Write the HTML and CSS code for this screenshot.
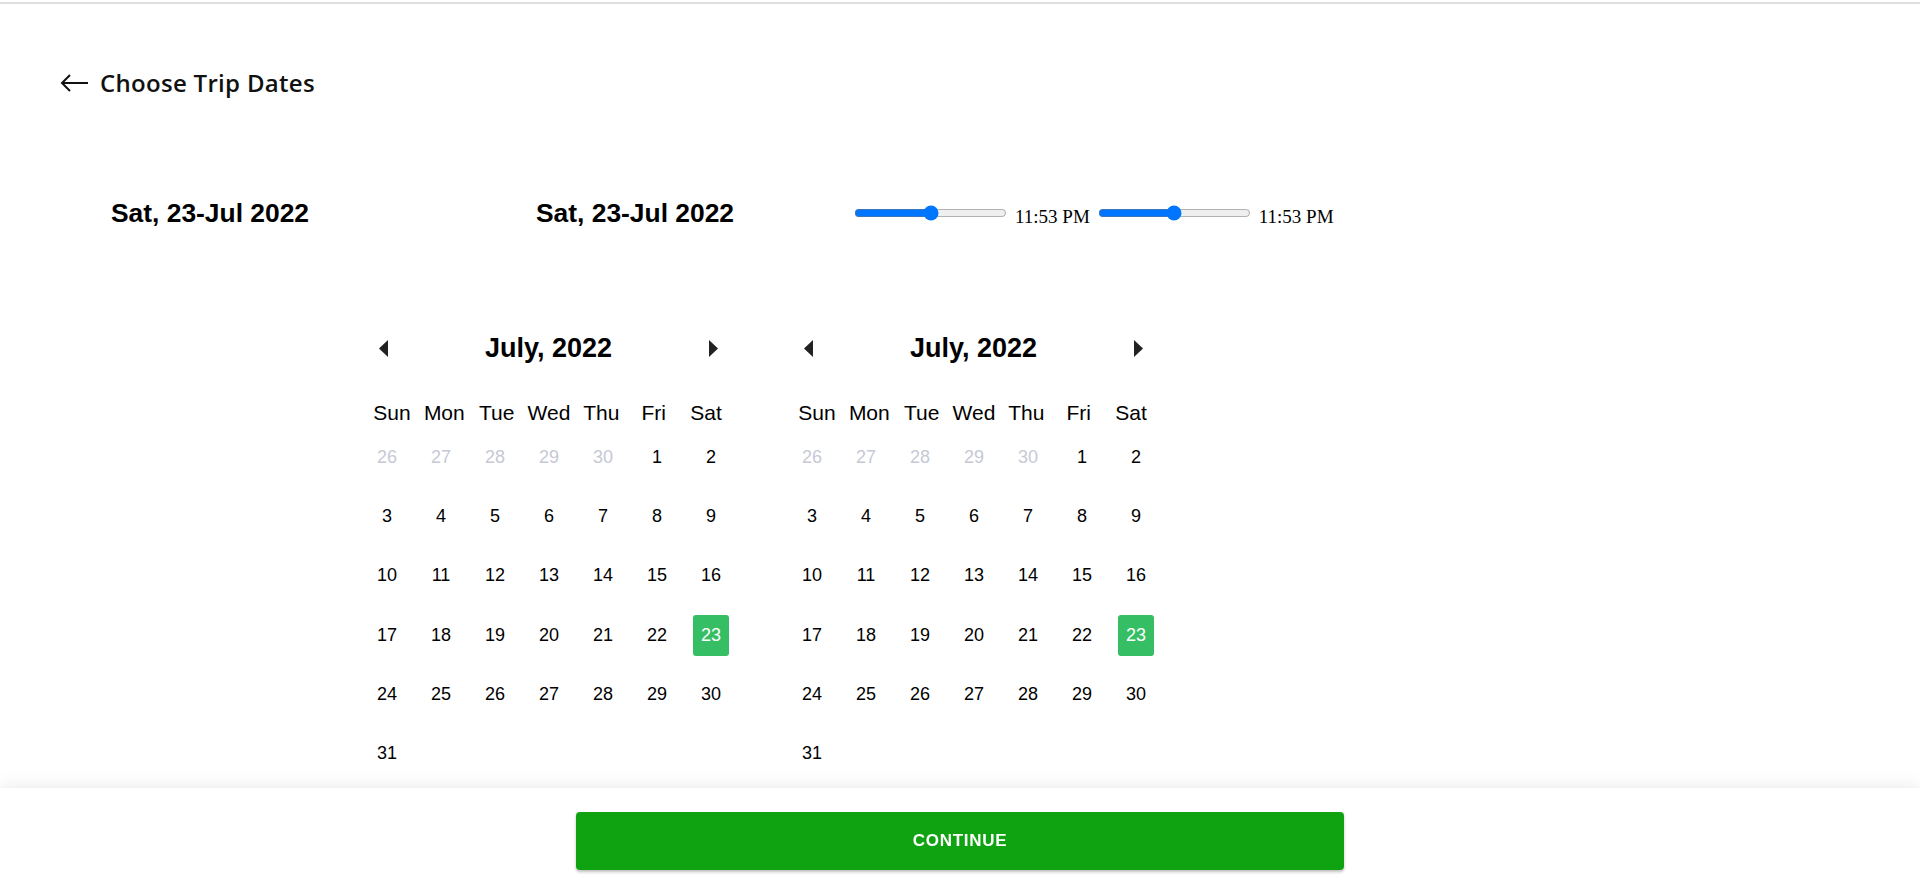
FILE: index.html
```html
<!DOCTYPE html>
<html lang="en">
<head>
<meta charset="utf-8">
<title>Choose Trip Dates</title>
<link rel="stylesheet" href="styles.css">
</head>
<body>
<div class="topline"></div>
<header class="page-header">
  <svg class="back-arrow" width="28" height="18" viewBox="0 0 28 18"><path d="M28 9 H2 M10 1 L2 9 L10 17" fill="none" stroke="#111" stroke-width="2"/></svg>
  <h1 class="page-title">Choose Trip Dates</h1>
</header>

<section class="dates-row">
  <div class="date-label date-col-1">Sat, 23-Jul 2022</div>
  <div class="date-label date-col-2">Sat, 23-Jul 2022</div>
  <div class="time-group">
    <input class="time-range" type="range" min="0" max="100" value="50">
    <span class="time-text">11:53 PM</span>
    <input class="time-range time-range-2" type="range" min="0" max="100" value="50">
    <span class="time-text">11:53 PM</span>
  </div>
</section>

<section class="calendars">
  <div class="calendar">
    <div class="cal-head">
      <svg class="nav" width="9" height="17" viewBox="0 0 9 17"><polygon points="9,0 0,8.5 9,17" fill="#222"/></svg>
      <div class="cal-title">July, 2022</div>
      <svg class="nav" width="9" height="17" viewBox="0 0 9 17"><polygon points="0,0 9,8.5 0,17" fill="#222"/></svg>
    </div>
    <div class="weekdays">
      <span>Sun</span><span>Mon</span><span>Tue</span><span>Wed</span><span>Thu</span><span>Fri</span><span>Sat</span>
    </div>
    <div class="days">
      <span class="day muted">26</span><span class="day muted">27</span><span class="day muted">28</span><span class="day muted">29</span><span class="day muted">30</span><span class="day">1</span><span class="day">2</span>
      <span class="day">3</span><span class="day">4</span><span class="day">5</span><span class="day">6</span><span class="day">7</span><span class="day">8</span><span class="day">9</span>
      <span class="day">10</span><span class="day">11</span><span class="day">12</span><span class="day">13</span><span class="day">14</span><span class="day">15</span><span class="day">16</span>
      <span class="day">17</span><span class="day">18</span><span class="day">19</span><span class="day">20</span><span class="day">21</span><span class="day">22</span><span class="day selected">23</span>
      <span class="day">24</span><span class="day">25</span><span class="day">26</span><span class="day">27</span><span class="day">28</span><span class="day">29</span><span class="day">30</span>
      <span class="day">31</span>
    </div>
  </div>
  <div class="calendar">
    <div class="cal-head">
      <svg class="nav" width="9" height="17" viewBox="0 0 9 17"><polygon points="9,0 0,8.5 9,17" fill="#222"/></svg>
      <div class="cal-title">July, 2022</div>
      <svg class="nav" width="9" height="17" viewBox="0 0 9 17"><polygon points="0,0 9,8.5 0,17" fill="#222"/></svg>
    </div>
    <div class="weekdays">
      <span>Sun</span><span>Mon</span><span>Tue</span><span>Wed</span><span>Thu</span><span>Fri</span><span>Sat</span>
    </div>
    <div class="days">
      <span class="day muted">26</span><span class="day muted">27</span><span class="day muted">28</span><span class="day muted">29</span><span class="day muted">30</span><span class="day">1</span><span class="day">2</span>
      <span class="day">3</span><span class="day">4</span><span class="day">5</span><span class="day">6</span><span class="day">7</span><span class="day">8</span><span class="day">9</span>
      <span class="day">10</span><span class="day">11</span><span class="day">12</span><span class="day">13</span><span class="day">14</span><span class="day">15</span><span class="day">16</span>
      <span class="day">17</span><span class="day">18</span><span class="day">19</span><span class="day">20</span><span class="day">21</span><span class="day">22</span><span class="day selected">23</span>
      <span class="day">24</span><span class="day">25</span><span class="day">26</span><span class="day">27</span><span class="day">28</span><span class="day">29</span><span class="day">30</span>
      <span class="day">31</span>
    </div>
  </div>
</section>

<footer class="footer">
  <button class="continue-btn" type="button">CONTINUE</button>
</footer>
</body>
</html>
```

FILE: styles.css
```css
html, body {
  margin: 0;
  padding: 0;
  background: #fff;
}

body {
  font-family: "Liberation Sans", Arial, sans-serif;
  color: #000;
}

.topline {
  margin-top: 2px;
  height: 2px;
  background: #dedede;
}

.page-header {
  display: flex;
  align-items: center;
  height: 40px;
  margin-top: 58px;
  padding-left: 60px;
}

.back-arrow {
  display: block;
  margin-right: 12px;
  margin-top: 1px;
}

.page-title {
  margin: 0;
  font-family: "Open Sans", "Noto Sans", sans-serif;
  font-weight: 600;
  font-size: 24px;
  letter-spacing: 0.3px;
  color: #111;
}

.dates-row {
  display: grid;
  grid-template-columns: 425px 318px auto;
  align-items: center;
  height: 40px;
  margin-top: 91px;
  padding-left: 111px;
}

.date-label {
  font-family: "Liberation Sans", Arial, sans-serif;
  font-weight: 700;
  font-size: 26.4px;
  color: #000;
}

.time-group {
  display: flex;
  align-items: center;
}

.time-range {
  width: 153px;
  margin: 0;
}

.time-range-2 {
  margin-left: 8px;
}

.time-text {
  font-family: "Liberation Serif", "Times New Roman", serif;
  font-size: 19px;
  margin-left: 8px;
  padding-top: 7px;
  color: #000;
}

.calendars {
  display: flex;
  gap: 47px;
  margin-top: 95px;
  padding-left: 360px;
}

.calendar {
  width: 378px;
}

.cal-head {
  display: flex;
  align-items: center;
  justify-content: space-between;
  height: 40px;
  padding: 0 20px 0 19px;
}

.nav {
  display: block;
}

.cal-title {
  font-weight: 700;
  font-size: 27px;
  color: #000;
}

.weekdays {
  display: grid;
  grid-template-columns: repeat(7, 52.35px);
  justify-content: center;
  height: 30px;
  margin-top: 30px;
  font-size: 21px;
  line-height: 30px;
  text-align: center;
}

.days {
  display: grid;
  grid-template-columns: repeat(7, 54px);
  grid-auto-rows: 59.2px;
}

.day {
  margin: 9px;
  height: 41px;
  line-height: 41px;
  text-align: center;
  font-size: 18px;
  color: #000;
  border-radius: 3px;
}

.day.muted {
  color: #c6c9d5;
}

.day.selected {
  background: #36be64;
  color: #fff;
}

.footer {
  position: fixed;
  left: 0;
  right: 0;
  bottom: 0;
  height: 105px;
  background: #fff;
  box-shadow: 0 0 18px rgba(0, 0, 0, 0.1);
  display: flex;
  align-items: center;
  justify-content: center;
}

.continue-btn {
  width: 768px;
  height: 58px;
  border: none;
  border-radius: 4px;
  background: #0fa311;
  color: #fff;
  font-family: "Liberation Sans", Arial, sans-serif;
  font-weight: 700;
  font-size: 17px;
  letter-spacing: 0.7px;
  box-shadow: 0 2px 3px rgba(0, 0, 0, 0.25);
  cursor: pointer;
}
```
